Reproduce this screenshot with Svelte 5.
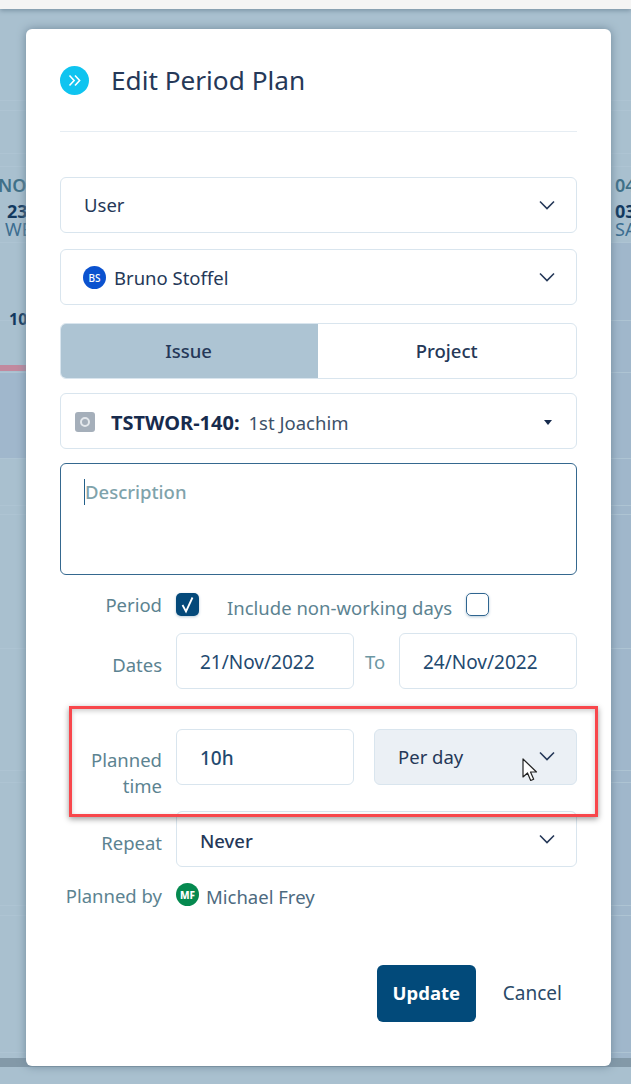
<script lang="ts">
	const bgLines = [100, 110, 153, 166, 242, 320, 372, 458, 505, 514, 648, 770, 782, 905, 915, 1052];
</script>

<div class="page">
	<div class="topbar"></div>

	<!-- calendar showing through the overlay -->
	<div class="backdrop">
		<i class="side-right"></i>
		<i class="band"></i>
		{#each bgLines as y}
			<i class="line" style="top: {y}px"></i>
		{/each}
		<i class="today"></i>
		<i class="foot"></i>
		<span class="cal month l">NOV</span>
		<span class="cal day l">23</span>
		<span class="cal week l">WED</span>
		<span class="cal hours">10</span>
		<span class="cal month r">04</span>
		<span class="cal day r">03</span>
		<span class="cal week r">SAT</span>
	</div>

	<div class="modal">
		<header>
			<span class="logo">
				<svg viewBox="0 0 29 29" width="29" height="29">
					<circle cx="14.5" cy="14.5" r="14.5" fill="#0fc4f0" />
					<path d="M9.5 9.5l4.6 5-4.6 5M15 9.5l4.6 5-4.6 5" fill="none" stroke="#fff" stroke-width="1.6" />
				</svg>
			</span>
			<h1>Edit Period Plan</h1>
		</header>

		<div class="field select first">
			<span>User</span>
			<svg class="chev" viewBox="0 0 16 10" width="16" height="10"><path d="M1 1.5l7 7 7-7" /></svg>
		</div>

		<div class="field select user">
			<span class="avatar blue">BS</span>
			<span>Bruno Stoffel</span>
			<svg class="chev" viewBox="0 0 16 10" width="16" height="10"><path d="M1 1.5l7 7 7-7" /></svg>
		</div>

		<div class="tabs">
			<div class="tab active">Issue</div>
			<div class="tab">Project</div>
		</div>

		<div class="field issue">
			<span class="issue-icon"><i></i></span>
			<b>TSTWOR-140:</b>
			<span class="issue-name">1st Joachim</span>
			<span class="caret"></span>
		</div>

		<div class="textarea"><i class="cursor"></i><span>Description</span></div>

		<div class="row period">
			<label for="p">Period</label>
			<span class="check on" id="p">
				<svg viewBox="0 0 23 23" width="23" height="23"><path d="M6.5 12l3.5 6.5L16.5 4.5" /></svg>
			</span>
			<span class="include">Include non-working days</span>
			<span class="check"></span>
		</div>

		<div class="row dates">
			<label for="d">Dates</label>
			<div class="field input" id="d">21/Nov/2022</div>
			<span class="to">To</span>
			<div class="field input">24/Nov/2022</div>
		</div>

		<div class="row planned">
			<label for="t">Planned time</label>
			<div class="field input" id="t">10h</div>
			<div class="field select hover">
				<span>Per day</span>
				<svg class="chev" viewBox="0 0 16 10" width="16" height="10"><path d="M1 1.5l7 7 7-7" /></svg>
			</div>
		</div>

		<div class="row repeat">
			<label for="r">Repeat</label>
			<div class="field select grow" id="r">
				<span>Never</span>
				<svg class="chev" viewBox="0 0 16 10" width="16" height="10"><path d="M1 1.5l7 7 7-7" /></svg>
			</div>
		</div>

		<div class="row by">
			<label for="b">Planned by</label>
			<span class="avatar green" id="b">MF</span>
			<span class="by-name">Michael Frey</span>
		</div>

		<footer>
			<button class="update">Update</button>
			<button class="cancel">Cancel</button>
		</footer>
	</div>

	<!-- annotation drawn on the screenshot -->
	<div class="callout"></div>
	<svg class="pointer" viewBox="0 0 17 25" width="17" height="25">
		<path d="M1 1v18l4.5-4 3.2 7.5 3-1.3-3.2-7.2H14.5z" fill="#fff" stroke="#222" stroke-width="1.2" stroke-linejoin="round" />
	</svg>
</div>

<style>
	:global(body) {
		margin: 0;
	}

	.page {
		position: relative;
		width: 631px;
		height: 1084px;
		overflow: hidden;
		box-sizing: border-box;
		padding: 29px 20px 18px 26px;
		background: #a9c0cf;
		font-family: 'Noto Sans', 'Open Sans', sans-serif;
		color: #253858;
	}

	.topbar {
		position: absolute;
		inset: 0 0 auto 0;
		height: 9px;
		background: #f4f4f4;
		box-shadow: 0 2px 4px #7f97a8;
		z-index: 1;
	}

	.backdrop {
		position: absolute;
		inset: 0;
	}

	.line {
		position: absolute;
		left: 0;
		right: 0;
		height: 1px;
		background: #aec4d3;
	}

	.side-right {
		position: absolute;
		right: 0;
		width: 40px;
		top: 243px;
		height: 815px;
		background: #a0b7cb;
	}

	.band {
		position: absolute;
		left: 0;
		width: 40px;
		top: 372px;
		height: 86px;
		background: #a0b7cc;
	}

	.today {
		position: absolute;
		left: 0;
		width: 40px;
		top: 365px;
		height: 6px;
		background: #c2899e;
	}

	.foot {
		position: absolute;
		left: 0;
		right: 0;
		top: 1058px;
		height: 9px;
		background: #8399a8;
	}

	.cal {
		position: absolute;
		font-size: 18px;
		line-height: 16px;
		white-space: nowrap;
	}

	.month {
		top: 177px;
		font-weight: 600;
		color: #3f7088;
	}

	.month.l {
		left: -2px;
	}

	.day {
		top: 203px;
		font-weight: 700;
		color: #12395f;
	}

	.day.l {
		left: 7px;
	}

	.week {
		top: 221px;
		color: #3b6d90;
	}

	.week.l {
		left: 5px;
	}

	.r {
		left: 615px;
	}

	.hours {
		left: 9px;
		top: 311px;
		font-weight: 700;
		font-size: 16px;
		color: #12395f;
	}

	.modal {
		position: relative;
		box-sizing: border-box;
		height: 1037px;
		width: 585px;
		padding: 0 34px;
		background: #fff;
		border-radius: 6px;
		box-shadow: 0 0 10px #6f8799;
	}

	header {
		display: flex;
		align-items: center;
		gap: 22px;
		height: 102px;
		border-bottom: 1px solid #e6edf3;
	}

	.logo {
		display: flex;
		margin-top: 1px;
	}

	h1 {
		margin: 0;
		font-size: 26.2px;
		line-height: 34px;
		font-weight: 400;
		color: #253858;
	}

	.field {
		display: flex;
		align-items: center;
		box-sizing: border-box;
		height: 56px;
		background: #fff;
		border: 1.5px solid #d9e5ee;
		border-radius: 6px;
		font-size: 18.5px;
		padding: 0 23px;
	}

	.select {
		justify-content: space-between;
		padding-right: 21px;
	}

	.first {
		margin-top: 45px;
		padding-bottom: 2px;
	}

	.first .chev {
		margin-top: 2px;
	}

	.user {
		margin-top: 16px;
		justify-content: flex-start;
		gap: 8px;
		padding-top: 1px;
	}

	.user .chev {
		margin-left: auto;
		margin-top: -2px;
	}

	.chev {
		fill: none;
		stroke: #253858;
		stroke-width: 1.6;
	}

	.avatar {
		display: flex;
		align-items: center;
		justify-content: center;
		flex: none;
		width: 23px;
		height: 23px;
		border-radius: 50%;
		color: #fff;
		font-size: 10px;
		font-weight: 500;
	}

	.blue {
		background: #0b52cf;
		margin-left: -1px;
	}

	.green {
		background: #05894f;
		font-weight: 800;
	}

	.tabs {
		display: flex;
		margin-top: 18px;
		height: 56px;
		box-sizing: border-box;
		border: 1.5px solid #d9e5ee;
		border-radius: 6px;
		overflow: hidden;
	}

	.tab {
		flex: 1;
		display: flex;
		align-items: center;
		justify-content: center;
		font-size: 18.5px;
		font-weight: 500;
		padding-bottom: 2px;
	}

	.tab.active {
		flex: none;
		width: 258px;
		background: #adc4d3;
		margin: -1.5px 0 -1.5px -1.5px;
	}

	.issue {
		margin-top: 14px;
		padding: 2px 24px 0 14px;
	}

	.issue-icon {
		display: flex;
		align-items: center;
		justify-content: center;
		flex: none;
		width: 20px;
		height: 20px;
		border-radius: 3px;
		background: #a5afba;
	}

	.issue-icon i {
		width: 6px;
		height: 6px;
		border: 2px solid #e4e8ec;
		border-radius: 50%;
	}

	.issue b {
		margin-left: 16px;
		font-size: 20px;
		font-weight: 700;
		color: #172b4d;
	}

	.issue-name {
		margin-left: 9px;
		color: #3c5169;
	}

	.caret {
		margin-left: auto;
		border: 4px solid transparent;
		border-top: 5px solid #172b4d;
		border-bottom: 0;
	}

	.textarea {
		display: flex;
		align-items: flex-start;
		box-sizing: border-box;
		height: 112px;
		margin-top: 14px;
		padding: 15px 23px;
		border: 1.5px solid #35688f;
		border-radius: 6px;
		font-size: 18.5px;
		font-weight: 500;
		line-height: 26px;
		color: #7fa3ab;
	}

	.cursor {
		width: 1px;
		height: 26px;
		background: #23608a;
	}

	.row {
		display: flex;
		align-items: center;
	}

	label {
		flex: none;
		width: 102px;
		margin-right: 14px;
		text-align: right;
		font-size: 18.5px;
		line-height: 26px;
		color: #5c8391;
	}

	.period {
		margin-top: 18px;
		height: 23px;
	}

	.check {
		flex: none;
		box-sizing: border-box;
		width: 23px;
		height: 23px;
		border: 1.5px solid #2f6590;
		border-radius: 5px;
		box-shadow: 0 1px 3px #b9cbd8;
	}

	.check.on {
		background: #04497a;
		border: 0;
	}

	.check svg {
		display: block;
		fill: none;
		stroke: #fff;
		stroke-width: 1.8;
	}

	.include {
		margin: 5px 14px 0 28px;
		font-size: 18.5px;
		white-space: nowrap;
		color: #5c8391;
	}

	.dates {
		margin-top: 17px;
	}

	.dates label {
		margin-top: 7px;
	}

	.input {
		flex: none;
		width: 178px;
		font-size: 19px;
		padding-top: 2px;
	}

	.dates .input {
		color: #1f4a70;
	}

	.to {
		flex: 1;
		text-align: center;
		font-size: 18.5px;
		color: #6c97a3;
		margin-right: 3px;
	}

	.planned {
		margin-top: 40px;
		align-items: flex-start;
	}

	.planned label {
		margin-top: 18px;
	}

	.planned .input {
		color: #1f4a70;
		font-weight: 500;
	}

	.hover {
		flex: none;
		width: 203px;
		margin-left: 20px;
		background: #ebf0f5;
		padding-bottom: 2px;
	}

	.repeat {
		margin-top: 12px;
	}

	.repeat label {
		margin-top: 7px;
	}

	.grow {
		flex: 1;
	}

	.repeat .select {
		font-weight: 500;
		padding-top: 2px;
	}

	.repeat .chev {
		margin-top: -2px;
	}

	.by {
		margin-top: 16px;
		height: 23px;
	}

	.by label {
		margin-top: 3px;
	}

	.by-name {
		margin: 3px 0 0 7px;
		font-size: 18.5px;
		color: #4d6a80;
	}

	footer {
		display: flex;
		justify-content: flex-end;
		align-items: center;
		gap: 27px;
		margin-top: 59px;
		padding-right: 15px;
	}

	button {
		font: inherit;
		font-size: 18.5px;
		border: 0;
		padding: 0 0 2px;
		background: none;
		color: #2a4a68;
	}

	.cancel {
		font-size: 19px;
	}

	.update {
		width: 99px;
		height: 57px;
		border-radius: 6px;
		background: #024a7a;
		color: #fff;
		font-weight: 700;
	}

	.callout {
		position: absolute;
		left: 69px;
		top: 706px;
		width: 529px;
		height: 111px;
		box-sizing: border-box;
		border: 3px solid #f8474c;
		box-shadow: 0 2px 6px #0006, inset 0 2px 5px #0003;
	}

	.pointer {
		position: absolute;
		left: 522px;
		top: 758px;
	}
</style>
